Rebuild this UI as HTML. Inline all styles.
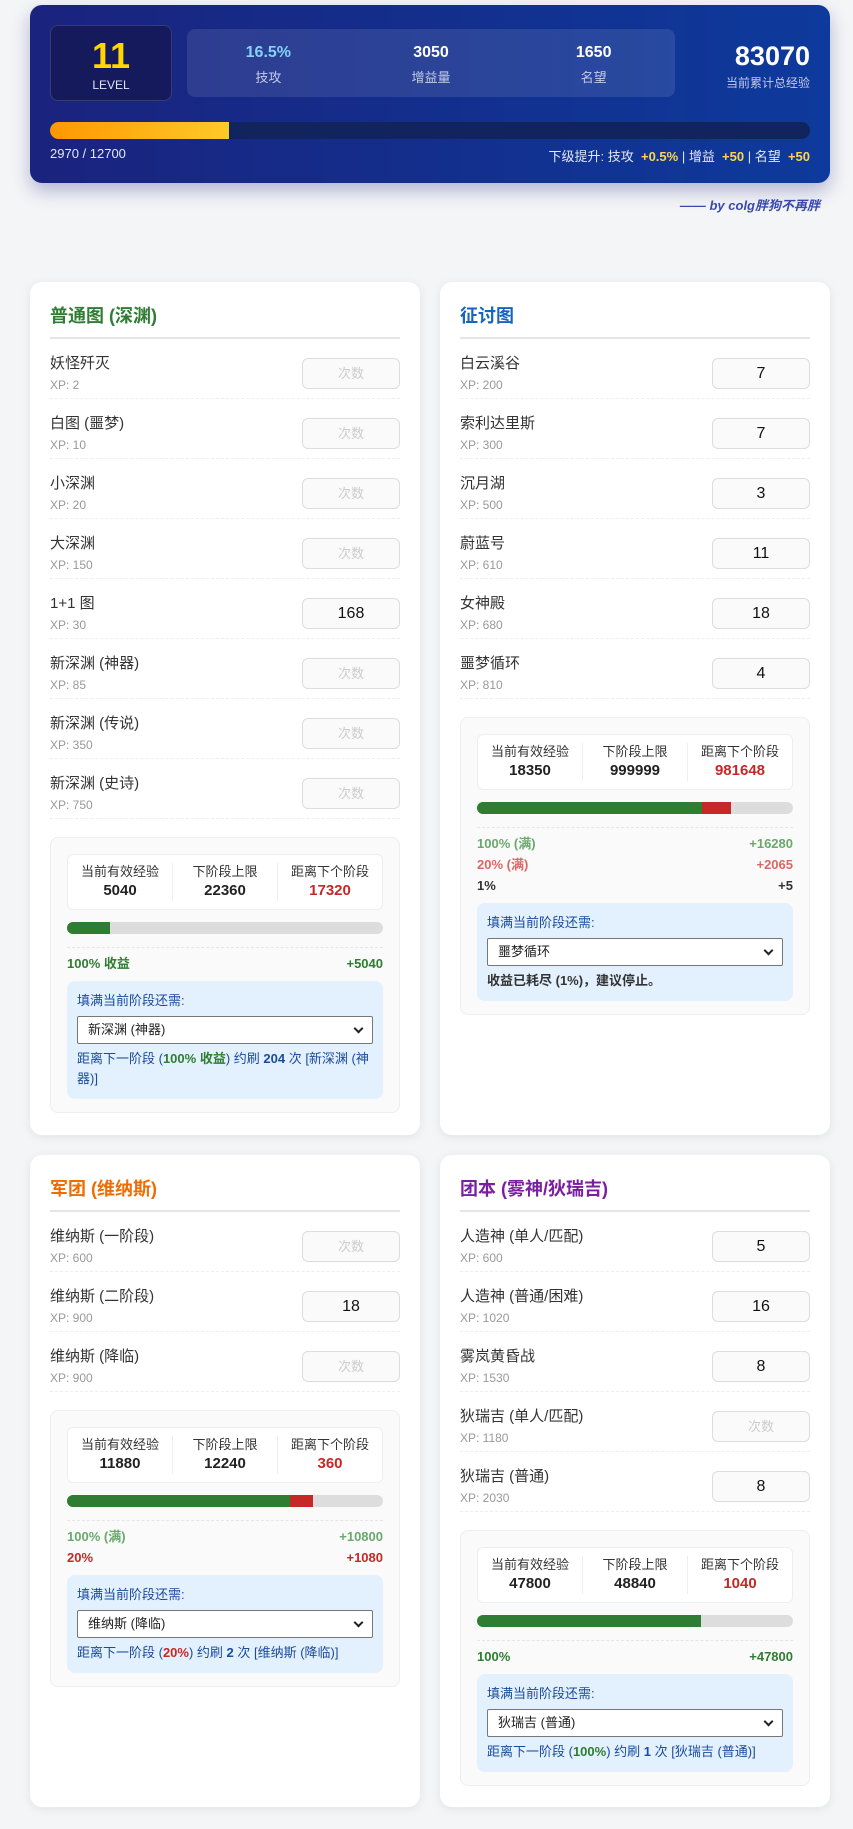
<!DOCTYPE html>
<html><head><meta charset="utf-8">
<style>
*{box-sizing:border-box;margin:0;padding:0}
body{width:853px;height:1829px;background:#f4f5f7;font-family:"Liberation Sans","Noto Sans CJK SC",sans-serif;position:relative;overflow:hidden;color:#333}
.hdr{position:absolute;left:30px;top:5px;width:800px;height:178px;border-radius:12px;background:linear-gradient(90deg,#1a237e,#0d3a9c);box-shadow:0 8px 18px rgba(26,35,126,.3);color:#fff}
.lvl{position:absolute;left:20px;top:20px;width:122px;height:76px;background:#141a5c;border:1px solid rgba(255,255,255,.15);border-radius:8px;text-align:center}
.lvl b{display:block;font-size:36px;color:#ffd600;line-height:40px;margin-top:10px}
.lvl span{font-size:12px;color:#dfe3f5}
.sts{position:absolute;left:157px;top:24px;width:488px;height:68px;background:rgba(255,255,255,.1);border-radius:8px;display:flex}
.sts div{flex:1;text-align:center;padding-top:14px}
.sts b{display:block;font-size:16px;line-height:20px}
.sts span{display:block;font-size:13px;color:#c5cae9;line-height:18px;margin-top:6px}
.tot{position:absolute;right:20px;top:36px;text-align:right}
.tot b{display:block;font-size:27px;line-height:30px}
.tot span{display:block;font-size:12px;color:#c5cae9;margin-top:3px}
.pb{position:absolute;left:20px;top:117px;width:760px;height:17px;border-radius:9px;background:#12245e;overflow:hidden}
.pb i{display:block;width:179px;height:100%;background:linear-gradient(90deg,#ff9800,#ffca28)}
.pl{position:absolute;left:20px;top:141px;font-size:13px;color:#e3e7f7}
.pr{position:absolute;right:20px;top:141px;font-size:13px;color:#e3e7f7}
.pr b{color:#ffd54f}
.by{position:absolute;right:33px;top:195px;font-size:13px;font-weight:bold;font-style:italic;color:#3949ab}
.card{position:absolute;width:390px;background:#fff;border-radius:12px;box-shadow:0 2px 10px rgba(0,0,0,.08);padding:20px 20px}
.ttl{font-size:18px;font-weight:bold;height:37px;line-height:28px;border-bottom:2px solid #e5e5e5}
.row{height:60px;border-bottom:1px dashed #eee;position:relative}
.row .n{position:absolute;left:0;top:15px;font-size:15px;line-height:20px;color:#333}
.row .x{position:absolute;left:0;top:38px;font-size:12px;line-height:16px;color:#999}
.row .in{position:absolute;right:0;top:19px;width:98px;height:31px;border:1px solid #ddd;border-radius:6px;background:#fafafa;text-align:center;line-height:29px;font-size:16px;color:#111}
.row .in.e{color:#ccc;font-size:13px}
.sum{margin-top:18px;background:#fafafa;border:1px solid #eee;border-radius:8px;padding:16px 16px 13px}
.sb{height:56px;background:#fff;border:1px solid #eee;border-radius:6px;display:flex;padding:8px 0}
.sb div{flex:1;text-align:center;border-left:1px solid #eee}
.sb div:first-child{border-left:none}
.sb span{display:block;font-size:13px;line-height:18px;color:#333}
.sb b{display:block;font-size:15px;line-height:20px;color:#222}
.bar{margin-top:12px;height:12px;border-radius:6px;background:#ddd;overflow:hidden;display:flex}
.g{background:#2e7d32}.r{background:#c62828}
.dl{border-top:1px dashed #e5e5e5;margin-top:13px;padding-top:5px}
.ln{display:flex;justify-content:space-between;font-size:13px;font-weight:bold;line-height:21px}
.blue{margin-top:7px;background:#e3f0fd;border-radius:8px;padding:11px 10px 10px}
.blue .h{font-size:13px;color:#1a4b9c;line-height:18px}
.sel{margin-top:6px;height:28px;border:1px solid #777;background:#fff;border-radius:2px;font-size:13px;line-height:26px;padding-left:10px;position:relative;color:#222}
.sel:after{content:"";position:absolute;right:10px;top:8px;width:5px;height:5px;border-right:2px solid #222;border-bottom:2px solid #222;transform:rotate(45deg)}
.blue .t{margin-top:5px;font-size:13px;line-height:20px;color:#1a4b9c}
</style></head><body>
<div class="hdr">
 <div class="lvl"><b>11</b><span>LEVEL</span></div>
 <div class="sts"><div><b style="color:#81d4fa">16.5%</b><span>技攻</span></div><div><b>3050</b><span>增益量</span></div><div><b>1650</b><span>名望</span></div></div>
 <div class="tot"><b>83070</b><span>当前累计总经验</span></div>
 <div class="pb"><i></i></div>
 <div class="pl">2970 / 12700</div>
 <div class="pr">下级提升: 技攻 &nbsp;<b>+0.5%</b> | 增益 &nbsp;<b>+50</b> | 名望 &nbsp;<b>+50</b></div>
</div>
<div class="by">—— by colg胖狗不再胖</div>

<div class="card" style="left:30px;top:282px;height:853px">
 <div class="ttl" style="color:#2e7d32">普通图 (深渊)</div>
 <div class="row"><div class="n">妖怪歼灭</div><div class="x">XP: 2</div><div class="in e">次数</div></div>
 <div class="row"><div class="n">白图 (噩梦)</div><div class="x">XP: 10</div><div class="in e">次数</div></div>
 <div class="row"><div class="n">小深渊</div><div class="x">XP: 20</div><div class="in e">次数</div></div>
 <div class="row"><div class="n">大深渊</div><div class="x">XP: 150</div><div class="in e">次数</div></div>
 <div class="row"><div class="n">1+1 图</div><div class="x">XP: 30</div><div class="in">168</div></div>
 <div class="row"><div class="n">新深渊 (神器)</div><div class="x">XP: 85</div><div class="in e">次数</div></div>
 <div class="row"><div class="n">新深渊 (传说)</div><div class="x">XP: 350</div><div class="in e">次数</div></div>
 <div class="row"><div class="n">新深渊 (史诗)</div><div class="x">XP: 750</div><div class="in e">次数</div></div>
 <div class="sum">
  <div class="sb"><div><span>当前有效经验</span><b>5040</b></div><div><span>下阶段上限</span><b>22360</b></div><div><span>距离下个阶段</span><b style="color:#c62828">17320</b></div></div>
  <div class="bar"><i class="g" style="width:13.5%"></i></div>
  <div class="dl"><div class="ln" style="color:#2e7d32"><span>100% 收益</span><span>+5040</span></div></div>
  <div class="blue"><div class="h">填满当前阶段还需:</div><div class="sel">新深渊 (神器)</div>
  <div class="t">距离下一阶段 (<b style="color:#2e7d32">100% 收益</b>) 约刷 <b>204</b> 次 [新深渊 (神器)]</div></div>
 </div>
</div>

<div class="card" style="left:440px;top:282px;height:853px">
 <div class="ttl" style="color:#1565c0">征讨图</div>
 <div class="row"><div class="n">白云溪谷</div><div class="x">XP: 200</div><div class="in">7</div></div>
 <div class="row"><div class="n">索利达里斯</div><div class="x">XP: 300</div><div class="in">7</div></div>
 <div class="row"><div class="n">沉月湖</div><div class="x">XP: 500</div><div class="in">3</div></div>
 <div class="row"><div class="n">蔚蓝号</div><div class="x">XP: 610</div><div class="in">11</div></div>
 <div class="row"><div class="n">女神殿</div><div class="x">XP: 680</div><div class="in">18</div></div>
 <div class="row"><div class="n">噩梦循环</div><div class="x">XP: 810</div><div class="in">4</div></div>
 <div class="sum">
  <div class="sb"><div><span>当前有效经验</span><b>18350</b></div><div><span>下阶段上限</span><b>999999</b></div><div><span>距离下个阶段</span><b style="color:#c62828">981648</b></div></div>
  <div class="bar"><i class="g" style="width:71.3%"></i><i class="r" style="width:9%"></i></div>
  <div class="dl"><div class="ln" style="color:#6aa86d"><span>100% (满)</span><span>+16280</span></div>
  <div class="ln" style="color:#d66"><span>20% (满)</span><span>+2065</span></div>
  <div class="ln" style="color:#333"><span>1%</span><span>+5</span></div></div>
  <div class="blue"><div class="h">填满当前阶段还需:</div><div class="sel">噩梦循环</div>
  <div class="t" style="color:#333;font-weight:bold">收益已耗尽 (1%)，建议停止。</div></div>
 </div>
</div>

<div class="card" style="left:30px;top:1155px;height:652px">
 <div class="ttl" style="color:#ef6c00">军团 (维纳斯)</div>
 <div class="row"><div class="n">维纳斯 (一阶段)</div><div class="x">XP: 600</div><div class="in e">次数</div></div>
 <div class="row"><div class="n">维纳斯 (二阶段)</div><div class="x">XP: 900</div><div class="in">18</div></div>
 <div class="row"><div class="n">维纳斯 (降临)</div><div class="x">XP: 900</div><div class="in e">次数</div></div>
 <div class="sum">
  <div class="sb"><div><span>当前有效经验</span><b>11880</b></div><div><span>下阶段上限</span><b>12240</b></div><div><span>距离下个阶段</span><b style="color:#c62828">360</b></div></div>
  <div class="bar"><i class="g" style="width:70.6%"></i><i class="r" style="width:7.1%"></i></div>
  <div class="dl"><div class="ln" style="color:#6aa86d"><span>100% (满)</span><span>+10800</span></div>
  <div class="ln" style="color:#c62828"><span>20%</span><span>+1080</span></div></div>
  <div class="blue"><div class="h">填满当前阶段还需:</div><div class="sel">维纳斯 (降临)</div>
  <div class="t">距离下一阶段 (<b style="color:#c62828">20%</b>) 约刷 <b>2</b> 次 [维纳斯 (降临)]</div></div>
 </div>
</div>

<div class="card" style="left:440px;top:1155px;height:652px">
 <div class="ttl" style="color:#7b1fa2">团本 (雾神/狄瑞吉)</div>
 <div class="row"><div class="n">人造神 (单人/匹配)</div><div class="x">XP: 600</div><div class="in">5</div></div>
 <div class="row"><div class="n">人造神 (普通/困难)</div><div class="x">XP: 1020</div><div class="in">16</div></div>
 <div class="row"><div class="n">雾岚黄昏战</div><div class="x">XP: 1530</div><div class="in">8</div></div>
 <div class="row"><div class="n">狄瑞吉 (单人/匹配)</div><div class="x">XP: 1180</div><div class="in e">次数</div></div>
 <div class="row"><div class="n">狄瑞吉 (普通)</div><div class="x">XP: 2030</div><div class="in">8</div></div>
 <div class="sum">
  <div class="sb"><div><span>当前有效经验</span><b>47800</b></div><div><span>下阶段上限</span><b>48840</b></div><div><span>距离下个阶段</span><b style="color:#c62828">1040</b></div></div>
  <div class="bar"><i class="g" style="width:71%"></i></div>
  <div class="dl"><div class="ln" style="color:#2e7d32"><span>100%</span><span>+47800</span></div></div>
  <div class="blue"><div class="h">填满当前阶段还需:</div><div class="sel">狄瑞吉 (普通)</div>
  <div class="t">距离下一阶段 (<b style="color:#2e7d32">100%</b>) 约刷 <b>1</b> 次 [狄瑞吉 (普通)]</div></div>
 </div>
</div>
</body></html>
